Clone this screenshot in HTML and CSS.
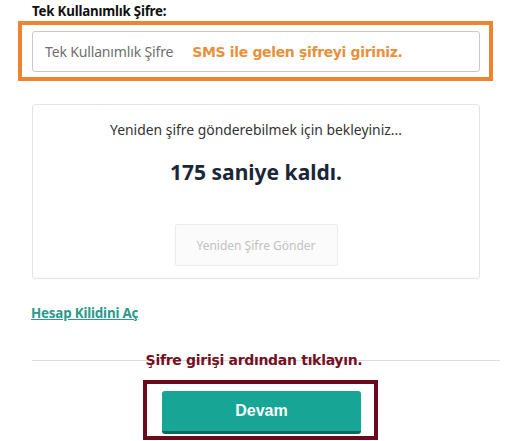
FILE: index.html
```html
<!DOCTYPE html>
<html lang="tr">
<head>
<meta charset="utf-8">
<title>Tek Kullanımlık Şifre</title>
<link rel="stylesheet" href="styles.css">
</head>
<body>
<main class="page">
  <div class="field-label">Tek Kullanımlık Şifre:</div>
  <div class="hl-orange">
    <div class="otp-input">
      <span class="placeholder">Tek Kullanımlık Şifre</span>
      <span class="hint-orange">SMS ile gelen şifreyi giriniz.</span>
    </div>
  </div>
  <section class="wait-box">
    <p class="wait-text">Yeniden şifre gönderebilmek için bekleyiniz...</p>
    <p class="countdown">175 saniye kaldı.</p>
    <button class="resend" disabled>Yeniden Şifre Gönder</button>
  </section>
  <a class="unlock" href="#">Hesap Kilidini Aç</a>
  <div class="divider"></div>
  <div class="hint-red">Şifre girişi ardından tıklayın.</div>
  <div class="hl-red">
    <button class="devam">Devam</button>
  </div>
</main>
</body>
</html>
```
FILE: styles.css
```css
html, body {
  margin: 0;
  padding: 0;
  background: #fff;
}
.page {
  display: flex;
  flex-direction: column;
  align-items: flex-start;
  font-family: "Noto Sans", "Liberation Sans", sans-serif;
  color: #333;
}
.field-label {
  margin: 3px 0 0 32px;
  font-size: 13.3px;
  font-weight: 700;
  color: #111;
  line-height: 16px;
  letter-spacing: -0.2px;
}
.hl-orange {
  margin: 2px 0 0 18px;
  width: 448px;
  height: 41px;
  border: 4px solid #ee8430;
  padding: 6px 9px 5px 10px;
  display: flex;
}
.otp-input {
  flex: 1;
  border: 1px solid #c9c9c9;
  border-radius: 3px;
  display: flex;
  align-items: center;
  padding-left: 12px;
}
.placeholder {
  font-size: 14px;
  color: #6f6f6f;
  letter-spacing: -0.15px;
}
.hint-orange {
  margin-left: 19px;
  font-family: "DejaVu Sans", sans-serif;
  font-weight: 700;
  font-size: 14px;
  color: #e8913d;
  letter-spacing: -0.35px;
}
.wait-box {
  margin: 23px 0 0 32px;
  width: 446px;
  height: 173px;
  border: 1px solid #e4e4e4;
  border-radius: 3px;
  display: flex;
  flex-direction: column;
  align-items: center;
}
.wait-text {
  margin: 16px 0 0;
  font-size: 13.9px;
  line-height: 18px;
  color: #333;
}
.countdown {
  margin: 20px 0 0;
  font-size: 21px;
  line-height: 26px;
  font-weight: 700;
  color: #1b2738;
}
.resend {
  margin-top: 39px;
  width: 163px;
  height: 42px;
  border: 1px solid #ececec;
  border-radius: 2px;
  background: #fbfbfb;
  font-family: "Noto Sans", sans-serif;
  font-size: 12px;
  color: #c2c2c2;
}
.unlock {
  margin: 26px 0 0 31px;
  font-size: 13.4px;
  font-weight: 700;
  line-height: 16px;
  color: #2a9a8c;
  text-decoration: underline;
  letter-spacing: -0.2px;
}
.divider {
  margin: 39px 0 0 32px;
  width: 468px;
  border-top: 1px solid #dcdcdc;
}
.hint-red {
  align-self: stretch;
  margin: -10px 0 0 0;
  padding-left: 2px;
  text-align: center;
  font-family: "DejaVu Sans", sans-serif;
  font-weight: 700;
  font-size: 14px;
  line-height: 18px;
  color: #74101f;
  letter-spacing: -0.3px;
  position: relative;
}
.hl-red {
  margin: 11px 0 0 143px;
  box-sizing: border-box;
  width: 235px;
  height: 60px;
  border: 4px solid #6b0a1c;
  padding: 7px 13px 2px 15px;
  display: flex;
}
.devam {
  flex: 1;
  border: none;
  border-bottom: 3px solid #0c6a61;
  border-radius: 3px;
  background: #17a696;
  color: #fff;
  font-family: "Liberation Sans", Arial, sans-serif;
  font-weight: 700;
  font-size: 16px;
}
```
